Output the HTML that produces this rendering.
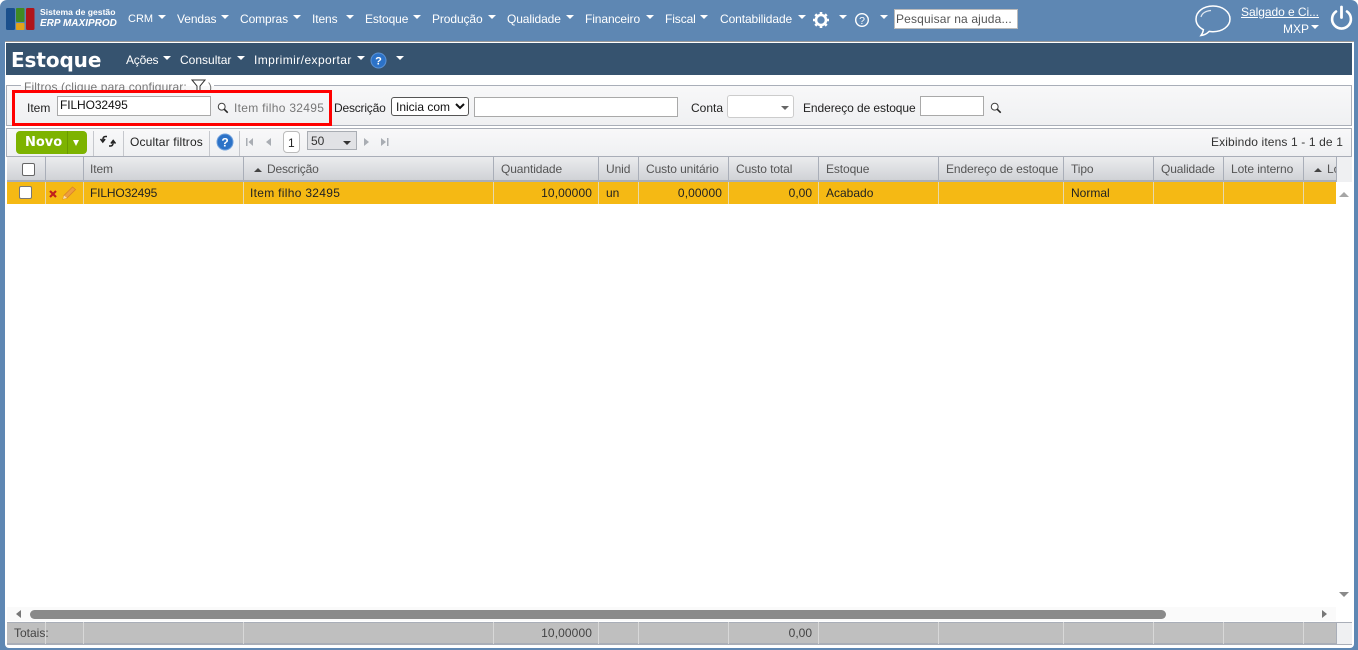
<!DOCTYPE html>
<html lang="pt"><head><meta charset="utf-8"><title>Estoque</title>
<style>
html,body{margin:0;padding:0;width:1358px;height:650px;overflow:hidden;background:#fff}
body{position:relative;font:12px "Liberation Sans",sans-serif;letter-spacing:0;color:#222}
div,span,svg,input,select{position:absolute;box-sizing:border-box}
.t{white-space:nowrap;line-height:14px}
.m{color:#fff;top:12px;letter-spacing:-.1px}
.a{width:0;height:0;border-left:4px solid transparent;border-right:4px solid transparent;border-top:4px solid #fff}
.h{top:162px;color:#555;letter-spacing:-.1px}
.r{top:186px;color:#222}
.v{width:1px;background:#a9aeb8}
.vr{width:1px;background:#e6d9ad}
.in{background:#fff;border:1px solid #a9a9a9}
.sp{width:1px;top:131px;height:25px;background:#c6c8cd}
.vt{width:1px;top:622px;height:22px;background:#d8d8d8}
</style></head><body>
<div style="left:0;top:0;width:1358px;height:650px;background:#5e87b3;border-radius:7px 7px 0 0"></div>
<div style="left:5px;top:41px;width:1349px;height:607px;background:#fff;border-top:1px solid #9a9a9a;border-radius:0 0 4px 4px"></div>

<svg style="left:5px;top:7px" width="31" height="24" viewBox="0 0 31 24">
<rect x="1" y="1" width="9" height="22" rx="1.5" fill="#1a4f8c"/><rect x="11" y="1" width="8.5" height="14" rx="1" fill="#3f8a23"/><rect x="11" y="16" width="8.5" height="7" rx="1" fill="#e2a21a"/><rect x="21" y="1" width="8.5" height="22" rx="1.5" fill="#b0141a"/></svg>
<span class="t" style="left:40px;top:5px;color:#fff;font-size:8.6px;font-weight:bold">Sistema de gestão</span>
<span class="t" style="left:40px;top:17px;color:#fff;font-size:10px;font-style:italic;font-weight:bold">ERP MAXIPROD</span>

<span class="t m" style="left:128px;font-size:11px;letter-spacing:0">CRM</span><div class="a" style="left:158px;top:15px"></div>
<span class="t m" style="left:177px">Vendas</span><div class="a" style="left:221px;top:15px"></div>
<span class="t m" style="left:240px">Compras</span><div class="a" style="left:293px;top:15px"></div>
<span class="t m" style="left:312px">Itens</span><div class="a" style="left:346px;top:15px"></div>
<span class="t m" style="left:365px">Estoque</span><div class="a" style="left:413px;top:15px"></div>
<span class="t m" style="left:432px">Produção</span><div class="a" style="left:488px;top:15px"></div>
<span class="t m" style="left:507px">Qualidade</span><div class="a" style="left:566px;top:15px"></div>
<span class="t m" style="left:585px">Financeiro</span><div class="a" style="left:646px;top:15px"></div>
<span class="t m" style="left:665px">Fiscal</span><div class="a" style="left:700px;top:15px"></div>
<span class="t m" style="left:720px">Contabilidade</span><div class="a" style="left:798px;top:15px"></div>

<svg style="left:812px;top:11px" width="18" height="18" viewBox="0 0 18 18"><circle cx="9" cy="9" r="5" fill="none" stroke="#fff" stroke-width="2.6"/><g stroke="#fff" stroke-width="2.6"><path d="M9 1v3M9 14v3M1 9h3M14 9h3M3.3 3.3l2.1 2.1M12.6 12.6l2.1 2.1M3.3 14.7l2.1-2.1M12.6 5.4l2.1-2.1"/></g></svg>
<div class="a" style="left:839px;top:15px"></div>
<svg style="left:854px;top:12px" width="16" height="16" viewBox="0 0 16 16"><circle cx="8" cy="8" r="6.3" fill="none" stroke="#fff" stroke-width="1.4"/><text x="8" y="12" text-anchor="middle" font-size="10.5" fill="#fff" font-family="Liberation Sans">?</text></svg>
<div class="a" style="left:880px;top:15px"></div>
<div class="in" style="left:894px;top:9px;width:124px;height:20px;border-color:#bbb"></div>
<span class="t" style="left:896px;top:12px;color:#555;letter-spacing:.15px">Pesquisar na ajuda...</span>

<svg style="left:1194px;top:4px" width="38" height="34" viewBox="0 0 38 34"><path d="M19 2C9.5 2 2 7.6 2 15c0 4.600 2.900 8.400 7.400 10.700-.3 2.200-1.200 4.200-2.400 5.800 3.400-.4 6.200-2 8.200-4.100 1.200.2 2.500.3 3.800.3 9.500 0 17-5.500 17-12.700S28.500 2 19 2z" fill="none" stroke="#fff" stroke-width="1.5"/><path d="M7 13c1-4 5-6 10-6.500" fill="none" stroke="#dfe8f2" stroke-width="1.200"/></svg>
<span class="t" style="left:1241px;top:5px;color:#fff;text-decoration:underline;letter-spacing:-.05px">Salgado e Ci...</span>
<span class="t" style="left:1283px;top:22px;color:#fff">MXP</span><div class="a" style="left:1311px;top:25px"></div>
<svg style="left:1329px;top:5px" width="25" height="26" viewBox="0 0 25 26"><path d="M7 6.500a9.400 9.400 0 1 0 11 0" fill="none" stroke="#fff" stroke-width="2.600" stroke-linecap="round"/><path d="M12.500 2v10.500" stroke="#fff" stroke-width="2.800" stroke-linecap="round"/></svg>

<div style="left:6px;top:43px;width:1346px;height:32px;background:#36536f"></div>
<span class="t" style="left:11px;top:47px;color:#fff;font:bold 20px/26px 'DejaVu Sans',sans-serif;letter-spacing:-.1px">Estoque</span>
<span class="t" style="left:126px;top:53px;color:#fff;letter-spacing:-.2px">Ações</span><div class="a" style="left:163px;top:56px"></div>
<span class="t" style="left:180px;top:53px;color:#fff">Consultar</span><div class="a" style="left:237px;top:56px"></div>
<span class="t" style="left:254px;top:53px;color:#fff;letter-spacing:.42px">Imprimir/exportar</span><div class="a" style="left:357px;top:56px"></div>
<svg style="left:370px;top:52px" width="17" height="17" viewBox="0 0 17 17"><circle cx="8.500" cy="8.500" r="7.500" fill="#2c72c7" stroke="#5c93d6"/><text x="8.500" y="12.500" text-anchor="middle" font-size="11" font-weight="bold" fill="#fff" font-family="Liberation Sans">?</text></svg>
<div class="a" style="left:396px;top:56px"></div>

<div style="left:6px;top:85px;width:1346px;height:41px;background:linear-gradient(#f8f8f9,#eff0f2);border:1px solid #a9aeb8"></div>
<div style="left:21px;top:78px;width:193px;height:8px;background:#fff"></div>
<span class="t" style="left:24px;top:80px;color:#777;height:11px;overflow:hidden;letter-spacing:.13px">Filtros (clique para configurar:</span>
<svg style="left:191px;top:79px" width="15" height="13" viewBox="0 0 15 13"><path d="M1 1h13L9 7v5H6V7z" fill="#fff" stroke="#333"/></svg>
<span class="t" style="left:208px;top:80px;color:#777;height:11px;overflow:hidden">)</span>

<span class="t" style="left:27px;top:101px">Item</span>
<div class="in" style="left:57px;top:96px;width:154px;height:20px"></div>
<span class="t" style="left:60px;top:98px;color:#111;letter-spacing:-.1px">FILHO32495</span>
<svg style="left:217px;top:102px" width="12" height="12" viewBox="0 0 14 14"><circle cx="5.500" cy="5.500" r="4" fill="#fff" stroke="#444" stroke-width="1.200"/><path d="M8.500 8.500l4 4" stroke="#222" stroke-width="1.800"/></svg>
<span class="t" style="left:234px;top:101px;color:#777;letter-spacing:.3px">Item filho 32495</span>
<span class="t" style="left:334px;top:101px;letter-spacing:-.2px">Descrição</span>
<select style="left:391px;top:97px;width:78px;height:19px;font:12px 'Liberation Sans',sans-serif;background:#fff;border:1px solid #555;border-radius:3px;color:#111;padding:0"><option>Inicia com</option></select>
<div class="in" style="left:474px;top:97px;width:204px;height:20px"></div>
<span class="t" style="left:691px;top:101px">Conta</span>
<div class="in" style="left:727px;top:95px;width:67px;height:23px;border-color:#ccc;border-radius:3px"></div>
<div style="left:781px;top:106px;width:0;height:0;border-left:4px solid transparent;border-right:4px solid transparent;border-top:4px solid #666"></div>
<span class="t" style="left:803px;top:101px;letter-spacing:-.08px">Endereço de estoque</span>
<div class="in" style="left:920px;top:96px;width:64px;height:20px"></div>
<svg style="left:990px;top:102px" width="12" height="12" viewBox="0 0 14 14"><circle cx="5.500" cy="5.500" r="4" fill="#fff" stroke="#444" stroke-width="1.200"/><path d="M8.500 8.500l4 4" stroke="#222" stroke-width="1.800"/></svg>

<div style="left:12px;top:90px;width:320px;height:36px;border:3px solid #f00"></div>

<div style="left:6px;top:128px;width:1346px;height:29px;background:linear-gradient(#f8f8f9,#eff0f2);border:1px solid #a9aeb8;border-bottom:none"></div>
<div style="left:16px;top:131px;width:71px;height:23px;background:#7db300;border-radius:4px"></div>
<div style="left:67px;top:131px;width:1px;height:23px;background:#6a9a00"></div>
<span class="t" style="left:25px;top:135px;color:#fff;font:bold 13px/15px 'DejaVu Sans',sans-serif">Novo</span>
<div style="left:73px;top:140px;width:0;height:0;border-left:3.500px solid transparent;border-right:3.500px solid transparent;border-top:6px solid #fff"></div>
<div class="sp" style="left:93px"></div><div class="sp" style="left:123px"></div><div class="sp" style="left:209px"></div><div class="sp" style="left:239px"></div>
<svg style="left:100px;top:134px" width="16" height="15" viewBox="0 0 16 15"><path d="M7 2.500H5.500C3.500 2.500 2.800 4 2.800 6.500M.5 5l2.300 3 2.300-3M9 12h1.500c2 0 2.700-1.500 2.700-4M15.500 9.500l-2.300-3-2.300 3" fill="none" stroke="#222" stroke-width="1.500"/></svg>
<span class="t" style="left:130px;top:135px;color:#222;letter-spacing:.15px">Ocultar filtros</span>
<svg style="left:216px;top:133px" width="18" height="18" viewBox="0 0 18 18"><circle cx="9" cy="9" r="8" fill="#2c72c7" stroke="#6d9fdc"/><text x="9" y="13.500" text-anchor="middle" font-size="12" font-weight="bold" fill="#fff" font-family="Liberation Sans">?</text></svg>
<svg style="left:244px;top:136px" width="146" height="12" viewBox="0 0 146 12" fill="#a9adb3"><path d="M2 2h1.500v8H2zM9 2v8L4.500 6zM27 2v8l-5-4zM120 2v8l5-4zM137 2v8l5-4zM143 2h1.500v8H143z"/></svg>
<div style="left:283px;top:131px;width:17px;height:22px;background:#fff;border:1px solid #bbb;border-radius:4px"></div>
<span class="t" style="left:288px;top:136px">1</span>
<div style="left:307px;top:131px;width:50px;height:19px;background:#e1e2e5;border:1px solid #a9adb3"></div>
<span class="t" style="left:311px;top:134px;color:#333">50</span>
<div style="left:343px;top:141px;width:0;height:0;border-left:4px solid transparent;border-right:4px solid transparent;border-top:4px solid #333"></div>
<span class="t" style="right:15px;top:135px;color:#333;letter-spacing:.13px">Exibindo itens 1 - 1 de 1</span>

<div style="left:7px;top:156px;width:1329px;height:26px;background:linear-gradient(#ebecee,#d0d2d6);border-top:1px solid #a9aeb8;border-bottom:2px solid #a9aeb8"></div>
<div style="left:1336px;top:156px;width:16px;height:26px;background:#eff0f2;border-top:1px solid #a9aeb8"></div>
<div class="v" style="left:45px;top:156px;height:26px"></div><div class="v" style="left:83px;top:156px;height:26px"></div><div class="v" style="left:243px;top:156px;height:26px"></div><div class="v" style="left:493px;top:156px;height:26px"></div><div class="v" style="left:598px;top:156px;height:26px"></div><div class="v" style="left:638px;top:156px;height:26px"></div><div class="v" style="left:728px;top:156px;height:26px"></div><div class="v" style="left:818px;top:156px;height:26px"></div><div class="v" style="left:938px;top:156px;height:26px"></div><div class="v" style="left:1063px;top:156px;height:26px"></div><div class="v" style="left:1153px;top:156px;height:26px"></div><div class="v" style="left:1223px;top:156px;height:26px"></div><div class="v" style="left:1303px;top:156px;height:26px"></div><div class="v" style="left:1336px;top:156px;height:26px"></div>
<div style="left:22px;top:163px;width:13px;height:13px;background:#fff;border:1px solid #666;border-radius:2px"></div>
<span class="t h" style="left:90px">Item</span>
<div style="left:254px;top:168px;width:0;height:0;border-left:4px solid transparent;border-right:4px solid transparent;border-bottom:4px solid #444"></div>
<span class="t h" style="left:267px;letter-spacing:-.2px">Descrição</span>
<span class="t h" style="left:501px">Quantidade</span>
<span class="t h" style="left:606px">Unid</span>
<span class="t h" style="left:646px">Custo unitário</span>
<span class="t h" style="left:736px">Custo total</span>
<span class="t h" style="left:826px">Estoque</span>
<span class="t h" style="left:946px">Endereço de estoque</span>
<span class="t h" style="left:1071px">Tipo</span>
<span class="t h" style="left:1161px">Qualidade</span>
<span class="t h" style="left:1231px">Lote interno</span>
<div style="left:1314px;top:168px;width:0;height:0;border-left:4px solid transparent;border-right:4px solid transparent;border-bottom:4px solid #444"></div>
<div class="t h" style="left:1327px;width:9px;overflow:hidden">Lote</div>

<div style="left:7px;top:182px;width:1329px;height:22px;background:#f5b914"></div>
<div class="vr" style="left:45px;top:182px;height:22px"></div><div class="vr" style="left:83px;top:182px;height:22px"></div><div class="vr" style="left:243px;top:182px;height:22px"></div><div class="vr" style="left:493px;top:182px;height:22px"></div><div class="vr" style="left:598px;top:182px;height:22px"></div><div class="vr" style="left:638px;top:182px;height:22px"></div><div class="vr" style="left:728px;top:182px;height:22px"></div><div class="vr" style="left:818px;top:182px;height:22px"></div><div class="vr" style="left:938px;top:182px;height:22px"></div><div class="vr" style="left:1063px;top:182px;height:22px"></div><div class="vr" style="left:1153px;top:182px;height:22px"></div><div class="vr" style="left:1223px;top:182px;height:22px"></div><div class="vr" style="left:1303px;top:182px;height:22px"></div>
<div style="left:19px;top:186px;width:13px;height:13px;background:#fff;border:1px solid #777;border-radius:2px"></div>
<svg style="left:49px;top:190px" width="8" height="8" viewBox="0 0 8 8"><path d="M1 1l6 6M7 1L1 7" stroke="#c0201c" stroke-width="2.200"/></svg>
<svg style="left:62px;top:186px" width="15" height="14" viewBox="0 0 15 14"><path d="M1 13l1-3.500L10.500 1l3 2.500L5 12z" fill="#ee9f3e" stroke="#d9822b" stroke-width=".8"/><path d="M1 13l1-3.500 3 2.500z" fill="#f7dfae"/></svg>
<span class="t r" style="left:90px;letter-spacing:-.15px">FILHO32495</span>
<span class="t r" style="left:250px;letter-spacing:.3px">Item filho 32495</span>
<span class="t r" style="right:766px;letter-spacing:.1px">10,00000</span>
<span class="t r" style="left:606px">un</span>
<span class="t r" style="right:636px;letter-spacing:.1px">0,00000</span>
<span class="t r" style="right:546px">0,00</span>
<span class="t r" style="left:826px">Acabado</span>
<span class="t r" style="left:1071px">Normal</span>

<div style="left:1339px;top:192px;width:0;height:0;border-left:5px solid transparent;border-right:5px solid transparent;border-bottom:5px solid #a6a6a6"></div>
<div style="left:1339px;top:592px;width:0;height:0;border-left:5px solid transparent;border-right:5px solid transparent;border-top:5px solid #8a8a8a"></div>

<div style="left:7px;top:607px;width:1329px;height:14px;background:#fafafa"></div>
<div style="left:16px;top:610px;width:0;height:0;border-top:4px solid transparent;border-bottom:4px solid transparent;border-right:5px solid #777"></div>
<div style="left:30px;top:610px;width:1136px;height:9px;background:#8a8a8a;border-radius:5px"></div>
<div style="left:1322px;top:610px;width:0;height:0;border-top:4px solid transparent;border-bottom:4px solid transparent;border-left:5px solid #777"></div>

<div style="left:7px;top:622px;width:1329px;height:23px;background:#bfbfbf;border-top:1px solid #a9aeb8;border-bottom:2px solid #a9aeb8"></div>
<div style="left:1336px;top:622px;width:16px;height:23px;background:#eff0f2;border:1px solid #a9aeb8;border-right:none"></div>
<div class="vt" style="left:45px"></div><div class="vt" style="left:83px"></div><div class="vt" style="left:243px"></div><div class="vt" style="left:493px"></div><div class="vt" style="left:598px"></div><div class="vt" style="left:638px"></div><div class="vt" style="left:728px"></div><div class="vt" style="left:818px"></div><div class="vt" style="left:938px"></div><div class="vt" style="left:1063px"></div><div class="vt" style="left:1153px"></div><div class="vt" style="left:1223px"></div><div class="vt" style="left:1303px"></div>
<span class="t" style="left:14px;top:626px;color:#444">Totais:</span>
<span class="t" style="right:766px;top:626px;color:#444;letter-spacing:.1px">10,00000</span>
<span class="t" style="right:546px;top:626px;color:#444">0,00</span>
</body></html>
